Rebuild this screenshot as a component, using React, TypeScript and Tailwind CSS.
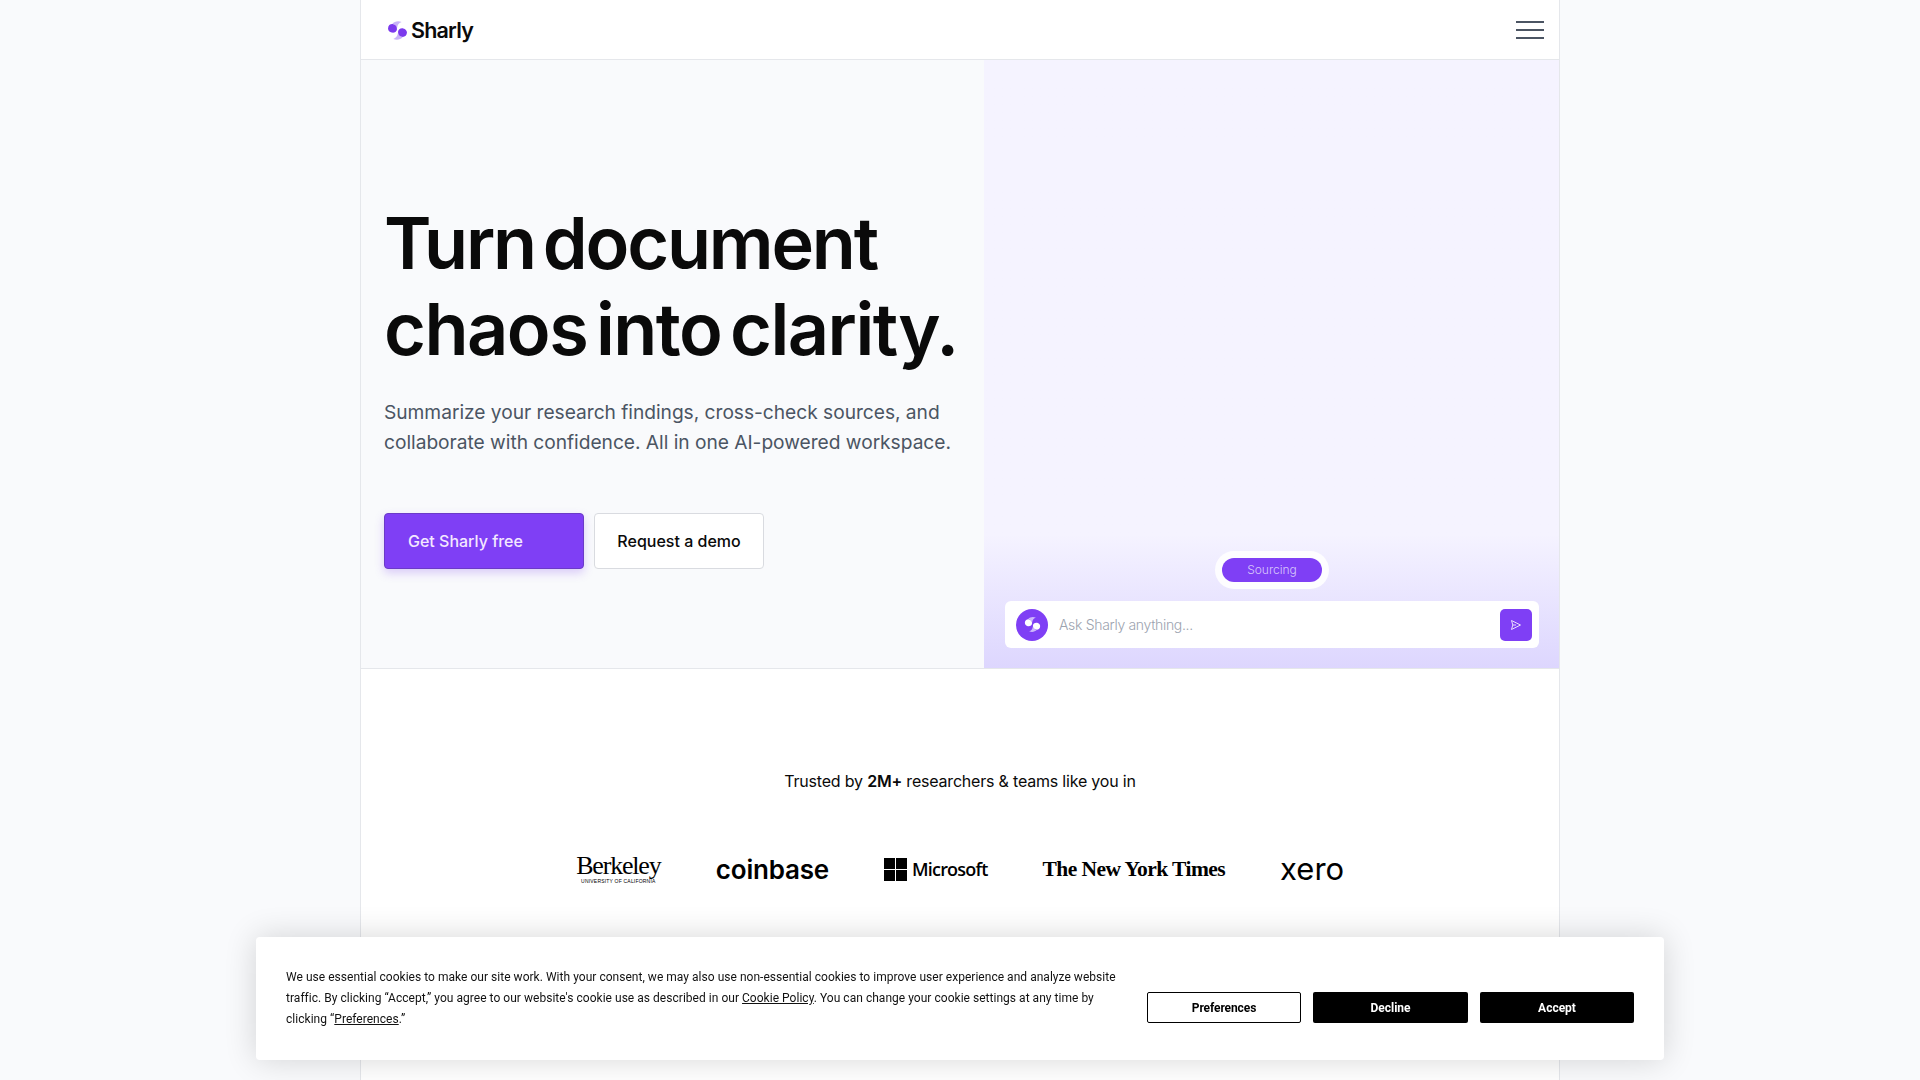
function LogoMark({ className, light }: { className: string; light?: boolean }) {
  const main = light ? "#ffffff" : "#7c3aed";
  const trail = light ? "#cdb8fa" : "#c9b3f8";
  return (
    <svg viewBox="0 0 20 20" className={className}>
      <path d="M5 3.5C7 1.5 10.5 0.5 14 2C11.5 2.5 10 4.5 9.5 8C9 5.5 7.5 4 5 3.5Z" fill={trail} />
      <path d="M15 16.5C13 18.5 9.5 19.5 6 18C8.5 17.5 10 15.5 10.5 12C11 14.5 12.5 16 15 16.5Z" fill={trail} />
      <path d="M1 8C1 5 3.5 3.5 6 4C8 4.5 9.5 6 9.5 8.5C9.5 11 7 12.5 4.5 12C2.5 11.5 1 10 1 8Z" fill={main} />
      <path d="M19 12C19 15 16.5 16.5 14 16C12 15.5 10.5 14 10.5 11.5C10.5 9 13 7.5 15.5 8C17.5 8.5 19 10 19 12Z" fill={main} />
    </svg>
  );
}

function SendIcon() {
  return (
    <svg viewBox="0 0 12 12" className="h-[12px] w-[12px]" fill="none" stroke="#e9defc" strokeWidth="1" strokeLinejoin="round">
      <path d="M1.5 1.5L10.5 6L1.5 10.5L2.8 6L1.5 1.5Z" />
      <path d="M2.8 6H6" />
    </svg>
  );
}

function MicrosoftLogo() {
  return (
    <div className="flex items-center gap-[5px]">
      <div className="grid h-[23px] w-[23px] grid-cols-2 gap-[1px]">
        <span className="bg-black" />
        <span className="bg-black" />
        <span className="bg-black" />
        <span className="bg-black" />
      </div>
      <span className="font-['Open_Sans',sans-serif] text-[18px] font-semibold tracking-[-0.8px] text-black">Microsoft</span>
    </div>
  );
}

function Logos() {
  return (
    <div className="mt-[56px] flex h-[40px] items-center justify-center gap-[55px]">
      <div className="flex w-[85px] flex-col items-center text-black">
        <span className="font-['Liberation_Serif',serif] text-[26px] leading-[21px] tracking-[-1.2px]">Berkeley</span>
        <span className="mt-[3px] whitespace-nowrap font-['Liberation_Sans',sans-serif] text-[5px] leading-[5px] tracking-[0.2px]">UNIVERSITY OF CALIFORNIA</span>
      </div>
      <span className="font-['Inter',sans-serif] text-[26px] font-semibold tracking-[-0.2px] text-black">coinbase</span>
      <MicrosoftLogo />
      <span className="whitespace-nowrap font-['Liberation_Serif',serif] text-[21.5px] font-bold tracking-[-0.55px] text-black">The New York Times</span>
      <span className="-mt-[2px] font-['Inter',sans-serif] text-[31px] font-normal leading-none tracking-[0px] text-black">xero</span>
    </div>
  );
}

function CookieBanner() {
  return (
    <div className="fixed bottom-[20px] left-[256px] flex h-[123px] w-[1408px] items-center justify-between rounded-[4px] bg-white px-[30px] shadow-[0_0_32px_rgba(0,0,0,0.16)]">
      <p className="w-[845px] font-['Roboto',sans-serif] text-[12px] leading-[21px] tracking-[0.03px] text-[#111111]">
        We use essential cookies to make our site work. With your consent, we may also use non-essential cookies to improve user experience and analyze website traffic. By clicking “Accept,” you agree to our website's cookie use as described in our <a className="underline">Cookie Policy</a>. You can change your cookie settings at any time by clicking “<a className="underline">Preferences</a>.”
      </p>
      <div className="mt-[18px] flex gap-[12px] font-['Roboto',sans-serif] text-[12px] font-bold">
        <button className="h-[31px] w-[154px] rounded-[2px] border border-black bg-white tracking-[-0.1px] text-black">Preferences</button>
        <button className="h-[31px] w-[155px] rounded-[2px] bg-black text-white">Decline</button>
        <button className="h-[31px] w-[154px] rounded-[2px] bg-black text-white">Accept</button>
      </div>
    </div>
  );
}

export default function App() {
  return (
    <div className="h-screen overflow-hidden bg-[#f9fafc] font-['Inter',sans-serif]">
      <div className="mx-auto h-full w-[1200px] border-x border-[#e5e7eb] bg-white">
        <header className="flex h-[60px] items-center justify-between border-b border-[#e5e7eb] pl-[26px] pr-[15px]">
          <div className="mt-[2px] flex items-center gap-[3px]">
            <LogoMark className="h-[21px] w-[21px]" />
            <span className="text-[21.5px] font-semibold tracking-[-0.8px] text-[#0a0a0a]">Sharly</span>
          </div>
          <div className="flex w-[28px] flex-col gap-[6px]">
            <span className="h-[2px] bg-[#4b5563]" />
            <span className="h-[2px] bg-[#4b5563]" />
            <span className="h-[2px] bg-[#4b5563]" />
          </div>
        </header>

        <section className="flex h-[609px] border-b border-[#e5e7eb]">
          <div className="w-[623px] bg-[#f9fafc] pl-[23px] pt-[140px]">
            <h1 className="text-[72px] font-[570] leading-[86px] text-[#0a0a0a] [word-spacing:-8px]">
              <span className="tracking-[-2.2px]">Turn document</span>
              <br />
              <span className="tracking-[-1.5px]">chaos into clarity.</span>
            </h1>
            <p className="mt-[25px] text-[19.2px] leading-[30px] tracking-[-0.03px] text-[#4b5563]">
              Summarize your research findings, cross-check sources, and
              <br />
              collaborate with confidence. All in one AI-powered workspace.
            </p>
            <div className="mt-[56px] flex gap-[10px]">
              <button className="h-[56px] w-[200px] rounded-[4px] border border-[#6b3bc7] bg-[#7f3ff5] pl-[23px] text-left text-[16px] font-medium text-[#f3e8ff] shadow-[0_4px_10px_rgba(124,63,238,0.25)]">
                Get Sharly free
              </button>
              <button className="h-[56px] w-[170px] rounded-[4px] border border-[#d9dbe0] bg-white text-[16px] font-medium text-[#0a0a0a]">
                Request a demo
              </button>
            </div>
          </div>

          <div className="flex flex-1 flex-col items-center justify-end bg-gradient-to-b from-[#f5f3ff] from-[78%] to-[#ddd6fe] pb-[20px] pl-[21px] pr-[20px]">
            <div className="mb-[12px] rounded-full bg-white/90 p-[7px]">
              <div className="flex h-[24px] w-[100px] items-center justify-center rounded-full bg-[#7f3ff5] text-[12px] font-light text-[#d8c7fb]">
                Sourcing
              </div>
            </div>
            <div className="flex h-[47px] w-full items-center rounded-[6px] bg-white pl-[11px] pr-[7px]">
              <div className="flex h-[32px] w-[32px] items-center justify-center rounded-full bg-[#7f3ff5]">
                <LogoMark className="h-[17px] w-[17px]" light />
              </div>
              <span className="ml-[11px] flex-1 text-[14px] font-light tracking-[-0.32px] text-[#9ca3af]">Ask Sharly anything...</span>
              <button className="flex h-[32px] w-[32px] items-center justify-center rounded-[5px] bg-[#7f3ff5]">
                <SendIcon />
              </button>
            </div>
          </div>
        </section>

        <section className="pt-[100px]">
          <p className="text-center text-[16px] leading-[24px] tracking-[-0.2px] text-[#0a0a0a]">
            Trusted by <span className="font-semibold">2M+</span> researchers &amp; teams like you in
          </p>
          <Logos />
        </section>
      </div>
      <CookieBanner />
    </div>
  );
}
